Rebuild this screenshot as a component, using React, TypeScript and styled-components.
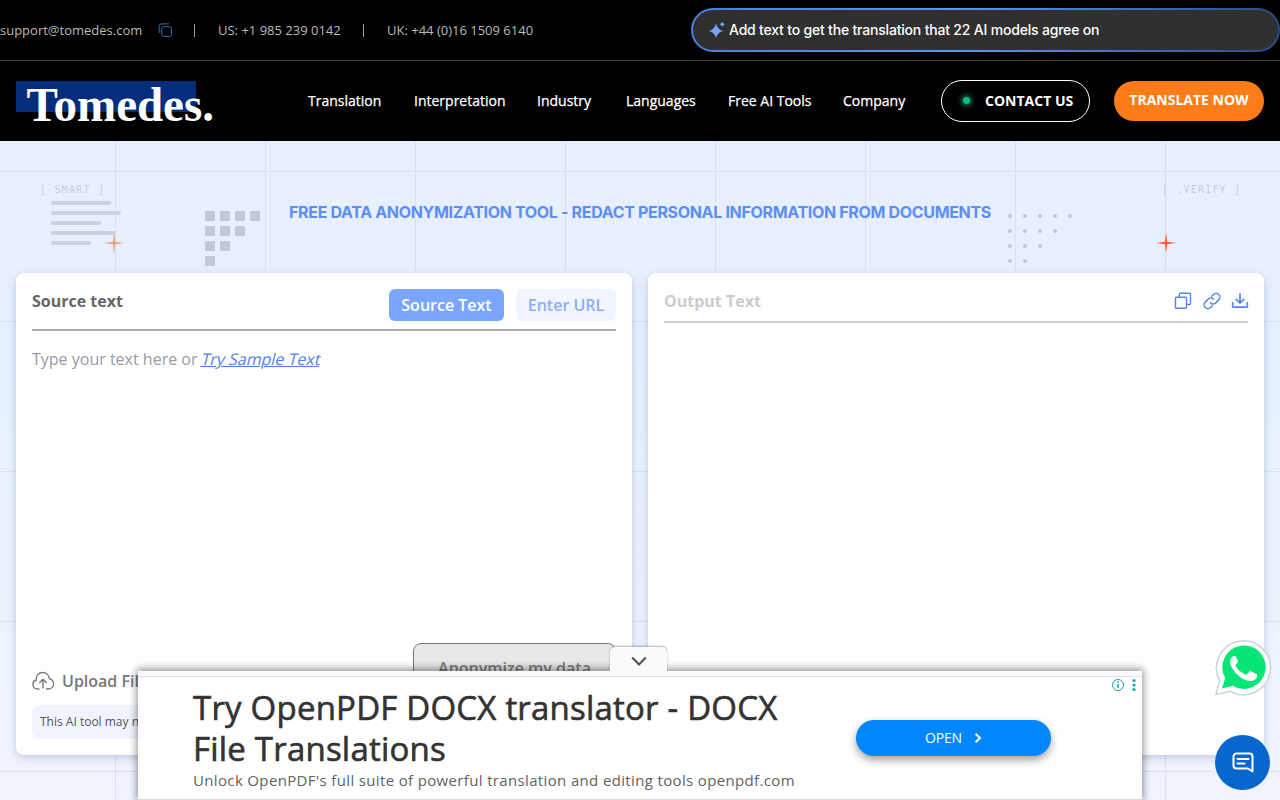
import React from "react";
import styled, { createGlobalStyle } from "styled-components";

const GlobalStyle = createGlobalStyle`
  *, *::before, *::after { box-sizing: border-box; }
  body { margin: 0; overflow: hidden; font-family: "Open Sans", sans-serif; }
  button { font: inherit; border: 0; padding: 0; background: none; cursor: pointer; }
  a { color: inherit; text-decoration: none; }
  svg { display: block; flex: none; }
`;

const Page = styled.div`
  position: relative;
  display: flex;
  flex-direction: column;
  width: 1280px;
  height: 800px;
  overflow: hidden;
`;

const TopBar = styled.div`
  display: flex;
  align-items: center;
  justify-content: space-between;
  height: 61px;
  flex: none;
  background: #000;
  border-bottom: 1px solid #4a4a4a;
`;

const ContactList = styled.div`
  display: flex;
  align-items: center;
  font-size: 13px;
  line-height: 20px;
  color: #b9b9b9;
  white-space: nowrap;
`;

const ContactText = styled.span<{ $width: number }>`
  width: ${(p) => p.$width}px;
`;

const CopyIcon = styled.svg`
  margin: 0 21px 0 16px;
`;

const Divider = styled.span`
  width: 1px;
  height: 13px;
  margin: 0 23px 0 0;
  background: #a0a0a0;
`;

const PromptBar = styled.div`
  display: flex;
  align-items: center;
  gap: 4px;
  width: 589px;
  height: 44px;
  padding: 0 0 1px 16px;
  border: 2px solid transparent;
  border-radius: 22px;
  background: linear-gradient(#303030, #303030) padding-box,
    linear-gradient(90deg, #4a80dc 0%, #5b96ef 45%, #4a7fd0 65%, #284b86 100%) border-box;
  color: #fff;
  font-family: Inter, sans-serif;
  font-size: 14px;
  font-weight: 500;
`;

const PromptText = styled.span`
  letter-spacing: -0.19px;
`;

const NavBar = styled.header`
  display: flex;
  align-items: center;
  height: 80px;
  flex: none;
  padding: 0 16px;
  background: #000;
`;

const Nav = styled.nav`
  display: flex;
  gap: 32px;
  margin-left: 92px;
  padding-bottom: 2px;
  color: #fff;
  font-size: 14px;
  font-weight: 500;
  -webkit-text-stroke: 0.25px #fff;
  white-space: nowrap;
`;

const NavLink = styled.a<{ $width: number }>`
  width: ${(p) => p.$width}px;
`;

const ContactButton = styled.button`
  display: flex;
  align-items: center;
  width: 149px;
  height: 42px;
  margin-left: 35px;
  padding: 0 0 1px 21px;
  border: 1px solid #fff;
  border-radius: 21px;
  color: #fff;
  font-size: 14px;
  font-weight: 700;
  white-space: nowrap;
`;

const StatusDot = styled.span`
  width: 7px;
  height: 7px;
  margin-right: 15px;
  border-radius: 50%;
  background: #10bd87;
  box-shadow: 0 0 5px 2px #04724f;
`;

const TranslateButton = styled.button`
  width: 150px;
  height: 40px;
  margin-left: 24px;
  padding-bottom: 3px;
  border-radius: 20px;
  background: #ff7c18;
  color: #fff;
  font-size: 14px;
  font-weight: 700;
  white-space: nowrap;
`;

const Hero = styled.main`
  position: relative;
  display: flex;
  flex-direction: column;
  flex: 1;
  padding: 0 16px;
  background-color: #e8efff;
  background-image: linear-gradient(90deg, #d9e0f0 1px, transparent 1px),
    linear-gradient(#d9e0f0 1px, transparent 1px),
    linear-gradient(#e8eeff, #e7f0ff 30%, #eaf2ff 65%, #f1f4ff);
  background-size: 150px 150px, 150px 150px, 100% 100%;
  background-position: 115px 0, 0 30px, 0 0;
`;

const Ornaments = styled.svg`
  position: absolute;
  left: 0;
  top: 0;
`;

const Title = styled.h1`
  position: relative;
  height: 132px;
  margin: 0;
  padding-top: 59px;
  color: #5b8ef8;
  font-family: Inter, sans-serif;
  font-size: 16px;
  font-weight: 700;
  line-height: 24px;
  text-align: center;
  letter-spacing: -0.33px;
  white-space: nowrap;
`;

const Panels = styled.div`
  position: relative;
  display: grid;
  grid-template-columns: 1fr 1fr;
  gap: 16px;
  height: 482px;
`;

const Panel = styled.section`
  display: flex;
  flex-direction: column;
  padding: 16px;
  border-radius: 8px;
  background: #fff;
  box-shadow: 0 3px 9px rgba(40, 60, 110, 0.22);
`;

const PanelHead = styled.div<{ $height: number; $line: string }>`
  display: flex;
  justify-content: space-between;
  height: ${(p) => p.$height}px;
  border-bottom: 2px solid ${(p) => p.$line};
`;

const PanelTitle = styled.h2<{ $color: string }>`
  margin: 0;
  color: ${(p) => p.$color};
  font-size: 16px;
  font-weight: 700;
  line-height: 24px;
`;

const Tabs = styled.div`
  display: flex;
  gap: 12px;
`;

const Tab = styled.button<{ $active?: boolean }>`
  width: ${(p) => (p.$active ? 115 : 100)}px;
  height: 32px;
  border-radius: 6px;
  background: ${(p) => (p.$active ? "#7ba6ff" : "#f1f5ff")};
  color: ${(p) => (p.$active ? "#fff" : "#8caef6")};
  font-size: 16px;
  font-weight: 600;
  white-space: nowrap;
`;

const Placeholder = styled.p`
  flex: 1;
  margin: 16px 0 0;
  color: #989ba5;
  font-size: 16px;
  line-height: 24px;
`;

const SampleLink = styled.a`
  display: inline-block;
  color: #4d83e9;
  text-decoration: underline;
  transform: skewX(-14deg);
`;

const Actions = styled.div`
  display: flex;
  align-items: flex-end;
  justify-content: space-between;
  height: 50px;
`;

const Upload = styled.div`
  display: flex;
  align-items: center;
  gap: 8px;
  align-self: flex-end;
  height: 24px;
  color: #777;
  font-size: 16px;
  font-weight: 600;
`;

const Submit = styled.button`
  width: 203px;
  height: 50px;
  border: 1px solid #777;
  border-radius: 8px;
  background: #e8e8e8;
  color: #7b7b7b;
  font-size: 16px;
  font-weight: 600;
`;

const Notice = styled.div`
  height: 34px;
  margin-top: 12px;
  padding: 0 8px;
  border-radius: 8px;
  background: #f1f4ff;
  color: #555;
  font-size: 12px;
  line-height: 33px;
`;

const Tools = styled.div`
  display: flex;
  gap: 10.5px;
  margin-right: -1px;
  padding-top: 3px;
`;

const AdBox = styled.aside`
  position: absolute;
  left: 138px;
  top: 671px;
  display: flex;
  width: 1004px;
  height: 129px;
  padding: 15.5px 0 0 55px;
  border-bottom: 1px solid #ddd;
  background: linear-gradient(#fafafa 5px, #e0e0e0 5px, #e0e0e0 6px, #fff 6px);
  box-shadow: 0 -1px 8px 1px rgba(0, 0, 0, 0.45);
  color: #333;
`;

const CollapseTab = styled.button`
  position: absolute;
  left: 610px;
  top: 647px;
  display: flex;
  justify-content: center;
  width: 57px;
  height: 25px;
  padding-top: 9px;
  border-radius: 5px 5px 0 0;
  background: #fafafa;
  box-shadow: 0 -1px 2px rgba(0, 0, 0, 0.3);
  clip-path: inset(-4px -4px 0 -4px);
`;

const AdCopy = styled.div`
  width: 663px;
`;

const AdTitle = styled.h3`
  margin: 0;
  font-size: 33px;
  font-weight: 500;
  line-height: 41px;
  letter-spacing: 0.21px;
  -webkit-text-stroke: 0.6px #333;
`;

const AdText = styled.p`
  margin: 0;
  color: #626262;
  font-size: 15px;
  line-height: 22px;
  letter-spacing: 0.35px;
  white-space: nowrap;
`;

const OpenButton = styled.button`
  display: flex;
  align-items: center;
  justify-content: center;
  gap: 12px;
  width: 195px;
  height: 36px;
  margin-top: 33.5px;
  border-radius: 18px;
  padding-bottom: 1px;
  background: #0087ff;
  box-shadow: 0 4px 9px rgba(0, 0, 0, 0.38);
  color: #fff;
  font-size: 14px;
  letter-spacing: -0.2px;
`;

const AdMarks = styled.svg`
  position: absolute;
  right: 2px;
  top: 7px;
`;

const WhatsAppButton = styled.svg`
  position: absolute;
  left: 1213.5px;
  top: 639px;
`;

const ChatButton = styled.button`
  position: absolute;
  left: 1215px;
  top: 735px;
  display: grid;
  place-items: center;
  width: 55px;
  height: 55px;
  border-radius: 50%;
  background: #0866cf;
`;

const navItems: [string, number][] = [
  ["Translation", 74],
  ["Interpretation", 91],
  ["Industry", 57],
  ["Languages", 70],
  ["Free AI Tools", 83],
  ["Company", 63],
];

const lines = [[203, 60], [213, 70], [223, 50], [233, 65], [243, 40]];

function Spark({ x, y, color }: { x: number; y: number; color: string }) {
  return (
    <path
      transform={`translate(${x} ${y})`}
      d="M0-10.5 1.2-1.2 10.5 0 1.2 1.2 0 10.5-1.2 1.2-10.5 0-1.2-1.2Z"
      fill={color}
    />
  );
}

function HeroOrnaments() {
  return (
    <Ornaments width="1280" height="132" viewBox="0 141 1280 132">
      <g fontFamily="DejaVu Sans Mono, monospace" fontSize="10" fill="#c8cddc">
        <text x="40" y="192.500" textLength="64">[ SMART ]</text>
        <text x="1162" y="192.500" textLength="78">[ .VERIFY ]</text>
      </g>
      {lines.map(([y, w]) => (
        <rect key={y} x="51" y={y - 2} width={w} height="4" rx="2" fill="#cbd1e0" />
      ))}
      {[4, 3, 2, 1].map((n, r) =>
        Array.from({ length: n }, (_, c) => (
          <rect key={`${r}${c}`} x={205 + c * 15} y={211 + r * 15} width="10" height="10" fill="#c2c8d8" />
        ))
      )}
      {[5, 4, 3, 2].map((n, r) =>
        Array.from({ length: n }, (_, c) => (
          <circle key={`${r}${c}`} cx={1010 + c * 15} cy={216 + r * 15} r="2" fill="#c2c8d8" />
        ))
      )}
      <Spark x={114} y={243} color="#f0a183" />
      <Spark x={1166} y={243} color="#f9662e" />
    </Ornaments>
  );
}

function Logo() {
  return (
    <svg width="200" height="44" viewBox="0 0 200 44" overflow="visible">
      <rect x="0" y="2" width="180" height="31" fill="#052d7e" />
      <text
        x="10.5"
        y="41.5"
        fill="#fff"
        fontFamily="Liberation Serif, serif"
        fontWeight="700"
        fontSize="48"
        textLength="187.5"
        lengthAdjust="spacingAndGlyphs"
      >
        Tomedes.
      </text>
    </svg>
  );
}

export default function App() {
  return (
    <Page>
      <GlobalStyle />
      <TopBar>
        <ContactList>
          <ContactText $width={142}>support@tomedes.com</ContactText>
          <CopyIcon width="15" height="15" viewBox="0 0 15 15" fill="none" stroke="#286fa9">
            <rect x="3.7" y="3.7" width="9.8" height="9.8" rx="2" />
            <path d="M1.2 10V3.3A2.4 2.4 0 0 1 3.6.9H11" />
          </CopyIcon>
          <Divider />
          <ContactText $width={145}>US: +1 985 239 0142</ContactText>
          <Divider />
          <ContactText $width={147}>UK: +44 (0)16 1509 6140</ContactText>
        </ContactList>
        <PromptBar>
          <svg width="16" height="16" viewBox="0 0 16 16" fill="#7ba3ef">
            <path d="M7 1.500Q8.300 7.300 14 9 8.300 10.700 7 16 5.700 10.700 0 9 5.700 7.300 7 1.500Z" />
            <circle cx="13.300" cy="2.300" r="1.800" />
          </svg>
          <PromptText>Add text to get the translation that 22 AI models agree on</PromptText>
        </PromptBar>
      </TopBar>
      <NavBar>
        <Logo />
        <Nav>
          {navItems.map(([label, width]) => (
            <NavLink key={label} $width={width} href="#">{label}</NavLink>
          ))}
        </Nav>
        <ContactButton><StatusDot />CONTACT US</ContactButton>
        <TranslateButton>TRANSLATE NOW</TranslateButton>
      </NavBar>
      <Hero>
        <HeroOrnaments />
        <Title>FREE DATA ANONYMIZATION TOOL - REDACT PERSONAL INFORMATION FROM DOCUMENTS</Title>
        <Panels>
          <Panel>
            <PanelHead $height={42} $line="#aaa">
              <PanelTitle $color="#666">Source text</PanelTitle>
              <Tabs>
                <Tab $active>Source Text</Tab>
                <Tab>Enter URL</Tab>
              </Tabs>
            </PanelHead>
            <Placeholder>
              Type your text here or <SampleLink href="#">Try Sample Text</SampleLink>
            </Placeholder>
            <Actions>
              <Upload>
                <svg width="22" height="20" viewBox="0 0 22 20" fill="none" stroke="currentColor" strokeWidth="1.4" strokeLinecap="round" strokeLinejoin="round">
                  <path d="M7 18H5.500A4.600 4.600 0 0 1 4.300 9C3.600 4.700 6.700 1.500 10.700 1.500c3.500 0 6.400 2.500 6.700 6.200A5.200 5.200 0 0 1 16.500 18H14.500" />
                  <path d="M11 17V8.500M7.700 11.500 11 8.200l3.300 3.300" />
                </svg>
                Upload File
              </Upload>
              <Submit>Anonymize my data</Submit>
            </Actions>
            <Notice>This AI tool may not be</Notice>
          </Panel>
          <Panel>
            <PanelHead $height={34} $line="#ccc">
              <PanelTitle $color="#ccc">Output Text</PanelTitle>
              <Tools>
                <svg width="18" height="18" viewBox="0 0 18 18" fill="none" stroke="#5686e6" strokeWidth="1.4" strokeLinejoin="round">
                  <rect x="1.500" y="5.300" width="11" height="11" rx="1" />
                  <path d="M5.300 5V2.300a1 1 0 0 1 1-1h9.200a1 1 0 0 1 1 1v9.200a1 1 0 0 1-1 1H13" />
                </svg>
                <svg width="18" height="18" viewBox="0 0 24 24" fill="none" stroke="#5686e6" strokeWidth="1.900" strokeLinecap="round">
                  <path d="M10 14.500a5 5 0 0 0 7 0l4-4A5 5 0 0 0 14 3.300l-2.500 2.500M14 9.500a5 5 0 0 0-7 0l-4 4a5 5 0 0 0 7 7.200l2.500-2.500" />
                </svg>
                <svg width="18" height="18" viewBox="0 0 18 18" fill="none" stroke="#5686e6" strokeWidth="1.700">
                  <path d="M1.700 10v4.200q0 1 1 1h12.600q1 0 1-1V10M9 1.200v9.500M4.800 6.800 9 11l4.200-4.200" />
                </svg>
              </Tools>
            </PanelHead>
          </Panel>
        </Panels>
      </Hero>
      <AdBox>
        <AdCopy>
          <AdTitle>Try OpenPDF DOCX translator - DOCX<br />File Translations</AdTitle>
          <AdText>Unlock OpenPDF's full suite of powerful translation and editing tools openpdf.com</AdText>
        </AdCopy>
        <OpenButton>
          OPEN
          <svg width="8" height="10" viewBox="0 0 8 10" fill="none" stroke="#fff" strokeWidth="2">
            <path d="M1.500 .8 6 5 1.500 9.200" />
          </svg>
        </OpenButton>
        <AdMarks width="30" height="14" viewBox="0 0 30 14" fill="#18a5ae">
          <circle cx="8" cy="7" r="5.500" fill="none" stroke="#18a5ae" />
          <path d="M7.300 6h1.500v4H7.300zM7.300 3.500h1.500V5H7.300z" />
          <circle cx="24" cy="2.500" r="1.600" />
          <circle cx="24" cy="7" r="1.600" />
          <circle cx="24" cy="11.500" r="1.600" />
        </AdMarks>
      </AdBox>
      <CollapseTab aria-label="Collapse">
        <svg width="16" height="11" viewBox="0 0 16 11" fill="none" stroke="#555" strokeWidth="2.200">
          <path d="M1.200 1.500 8 8.500l6.800-7" />
        </svg>
      </CollapseTab>
      <WhatsAppButton width="58" height="58" viewBox="0 0 58 58">
        <path d="M2 55.500 5.800 41.800A27 27 0 1 1 16 52.200Z" fill="#fff" stroke="#cdd3d8" strokeWidth="1.500" />
        <path d="M8 49.500 11.200 39A21.700 21.700 0 1 1 18.700 46.700Z" fill="#06e676" />
        <path
          d="M21.500 17.200c-1.500-.5-3 .2-4.500 2.300-1.700 3-.8 7 2 11 4 5.600 8.700 9.600 14.400 11.200 4.700 1.300 9.200-.7 9.800-4.700.1-1 0-1.700-.7-2.100l-5.500-2.700c-.8-.4-1.400-.1-1.900.5l-2.100 2.600c-.5.600-1 .6-1.700.3-4.500-2-7.500-4.800-9.600-8.500-.4-.7-.2-1.200.3-1.700l1.600-2c.4-.6.4-1.100.2-1.700l-2-4.300c-.1-.1-.2-.2-.3-.2Z"
          fill="#fff"
        />
      </WhatsAppButton>
      <ChatButton aria-label="Chat">
        <svg width="22" height="21" viewBox="0 0 22 21" fill="none" stroke="#fff" strokeWidth="2" strokeLinejoin="round">
          <path d="M20.500 19.500V4.500a3 3 0 0 0-3-3h-13a3 3 0 0 0-3 3v9a3 3 0 0 0 3 3H16Z" />
          <path d="M5.500 7h11M5.500 11.500h7" strokeLinecap="round" />
        </svg>
      </ChatButton>
    </Page>
  );
}
